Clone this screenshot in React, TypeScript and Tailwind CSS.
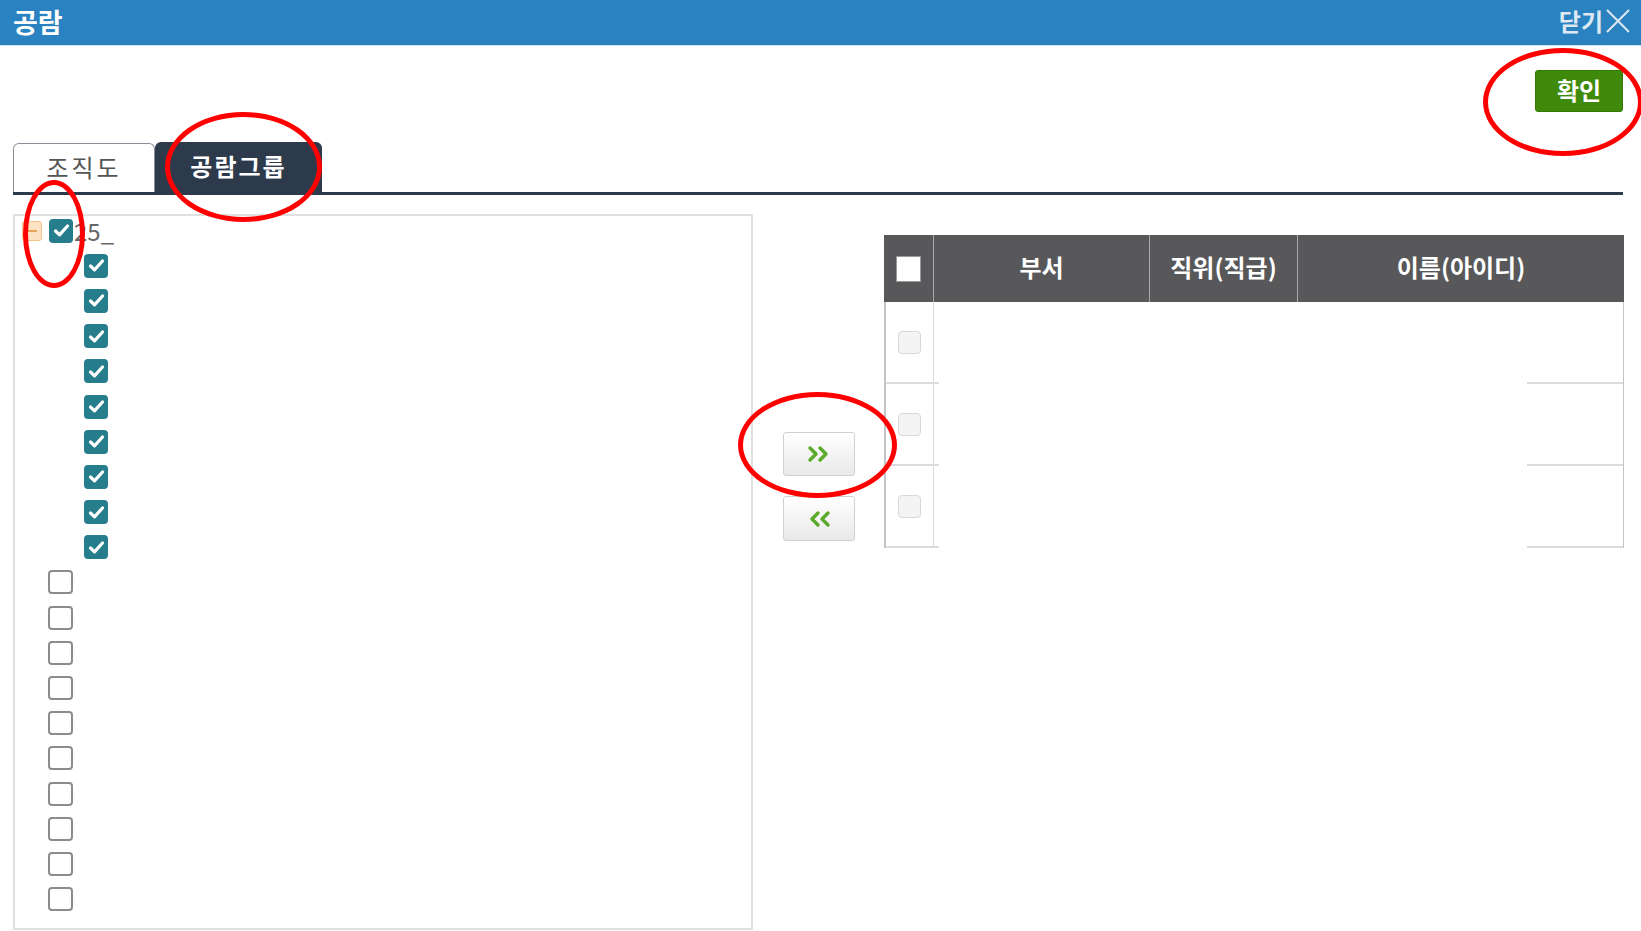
import React from "react";

const FONT = { fontFamily: '"Noto Sans CJK KR", "Noto Sans", sans-serif' };

// teal checked box used in the tree
const Checked = () => (
  <span className="flex h-[24px] w-[24px] items-center justify-center rounded-[4px] bg-[#267d8b]">
    <svg width="17" height="15" viewBox="0 0 17 15">
      <path d="M2.5 8 L6.5 11.8 L14.5 3" fill="none" stroke="white" strokeWidth="3.2" strokeLinecap="round" strokeLinejoin="round" />
    </svg>
  </span>
);

const Unchecked = () => (
  <span className="block h-[24px] w-[25px] rounded-[4px] border-2 border-[#8c8c8c] bg-white" />
);

const Chevrons = ({ dir }: { dir: "right" | "left" }) => (
  <svg width="26" height="18" viewBox="0 0 26 18">
    {dir === "right" ? (
      <g fill="none" stroke="#5aaa2c" strokeWidth="3.4" strokeLinecap="round" strokeLinejoin="round">
        <path d="M4 3 L10 9 L4 15" />
        <path d="M14 3 L20 9 L14 15" />
      </g>
    ) : (
      <g fill="none" stroke="#5aaa2c" strokeWidth="3.4" strokeLinecap="round" strokeLinejoin="round">
        <path d="M12 3 L6 9 L12 15" />
        <path d="M22 3 L16 9 L22 15" />
      </g>
    )}
  </svg>
);

export default function App() {
  const children = Array.from({ length: 9 });
  const others = Array.from({ length: 10 });
  const rows = [82, 82, 82];

  return (
    <div className="relative h-[931px] w-[1641px] overflow-hidden bg-white" style={FONT}>
      {/* title bar */}
      <div className="flex h-[46px] items-center justify-between border-b border-[#cfe2f0] bg-[#2a82c0] pl-[13px] pr-[10px]">
        <span className="-mt-[3px] text-[27px] font-bold leading-none text-white">공람</span>
        <div className="-mt-[3px] flex items-center gap-[2px] text-[#dde8f2]">
          <span className="text-[24px] font-bold leading-none">닫기</span>
          <svg width="26" height="26" viewBox="0 0 26 26">
            <path d="M2 2 L24 24 M24 2 L2 24" stroke="#dde8f2" strokeWidth="2" />
          </svg>
        </div>
      </div>

      {/* confirm */}
      <div className="flex justify-end pr-[18px] pt-[24px]">
        <button className="h-[42px] w-[88px] rounded-[3px] border border-[#357a07] bg-[#3f8a0b] pb-[3px] text-[24px] font-bold leading-none text-white">
          확인
        </button>
      </div>

      {/* tabs */}
      <div className="ml-[13px] mr-[18px] mt-[30px] flex items-end border-b-[3px] border-[#2d3a4c]">
        <div className="flex h-[49px] w-[142px] items-center justify-center rounded-t-[6px] border border-b-0 border-[#8a9099] bg-white pb-[2px] text-[24px] tracking-[3px] text-[#555]">
          조직도
        </div>
        <div className="flex h-[50px] w-[167px] items-center justify-center rounded-t-[6px] bg-[#2d3a4c] pb-[2px] text-[24px] font-bold tracking-[2px] text-white">
          공람그룹
        </div>
      </div>

      {/* content */}
      <div className="ml-[13px] mt-[19px] flex">
        {/* tree */}
        <div className="h-[716px] w-[740px] border-2 border-[#e0e0e0]">
          <div className="-mt-[3px]">
            <div className="flex h-[35.2px] items-center">
              <span className="ml-[7px] flex h-[20px] w-[20px] items-center justify-center rounded-[3px] border border-[#f3c48a] bg-[#fde3c4]">
                <span className="block h-[2px] w-[9px] bg-[#e8a45a]" />
              </span>
              <span className="ml-[7px]"><Checked /></span>
              <span className="ml-[1px] text-[24px] leading-none text-[#666]">25_</span>
            </div>
            {children.map((_, i) => (
              <div key={i} className="flex h-[35.2px] items-center pl-[69px]">
                <Checked />
              </div>
            ))}
            {others.map((_, i) => (
              <div key={i} className="flex h-[35.2px] items-center pl-[33px]">
                <Unchecked />
              </div>
            ))}
          </div>
        </div>

        {/* move buttons */}
        <div className="flex w-[131px] flex-col items-center pt-[218px]">
          <button className="flex h-[44px] w-[72px] items-center justify-center rounded-[3px] border border-[#d0d0d0] bg-gradient-to-b from-white to-[#e9e9e9]">
            <Chevrons dir="right" />
          </button>
          <button className="mt-[20px] flex h-[45px] w-[72px] items-center justify-center rounded-[3px] border border-[#d0d0d0] bg-gradient-to-b from-white to-[#e9e9e9]">
            <Chevrons dir="left" />
          </button>
        </div>

        {/* selected table */}
        <div className="mt-[21px] w-[740px]">
          <div className="flex h-[67px] bg-[#58585a] text-[24px] font-bold text-white">
            <div className="flex w-[50px] items-center justify-center border-r border-[#a8a8a8]">
              <span className="block h-[26px] w-[25px] border border-[#999] bg-white" />
            </div>
            <div className="flex w-[216px] items-center justify-center border-r border-[#a8a8a8] pb-[3px]">부서</div>
            <div className="flex w-[148px] items-center justify-center border-r border-[#a8a8a8] pb-[3px]">직위(직급)</div>
            <div className="flex flex-1 items-center justify-center pb-[3px]">이름(아이디)</div>
          </div>
          <div className="border-l-2 border-r border-l-[#c4c4c8] border-r-[#c4c4c8]">
            {rows.map((h, i) => (
              <div key={i} className="flex" style={{ height: h }}>
                <div className="flex w-[48px] items-center justify-center border-b-2 border-r border-[#dcdce0]">
                  <span className="block h-[23px] w-[23px] rounded-[4px] border border-[#d8d8d8] bg-[#f4f4f4]" />
                </div>
                <div className="w-[5px] border-b-2 border-[#dcdce0]" />
                <div className="flex-1" />
                <div className="w-[96px] border-b-2 border-[#dcdce0]" />
              </div>
            ))}
          </div>
        </div>
      </div>

      {/* red annotation marks */}
      <div className="absolute left-[1483px] top-[48px] h-[108px] w-[160px] rounded-[50%] border-[5px] border-[#ff0000]" />
      <div className="absolute left-[165px] top-[112px] h-[110px] w-[157px] rounded-[50%] border-[5px] border-[#ff0000]" />
      <div className="absolute left-[23px] top-[180px] h-[108px] w-[62px] rounded-[50%] border-[5px] border-[#ff0000]" />
      <div className="absolute left-[738px] top-[392px] h-[106px] w-[159px] rounded-[50%] border-[5px] border-[#ff0000]" />
    </div>
  );
}
